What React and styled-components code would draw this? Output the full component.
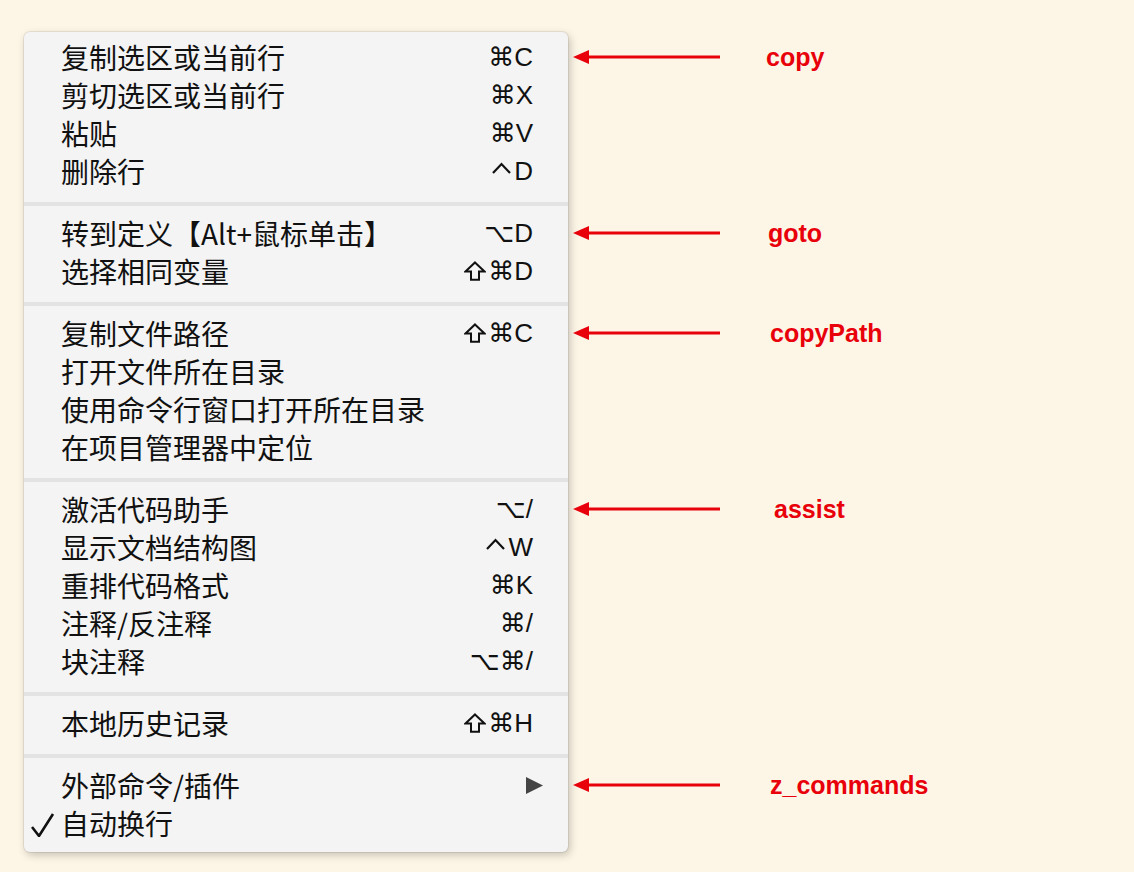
import React from 'react';
import styled, { createGlobalStyle } from 'styled-components';

const GlobalStyle = createGlobalStyle`
  html, body {
    margin: 0;
    padding: 0;
    background: #fdf6e6;
  }
`;

const Page = styled.div`
  min-height: 100vh;
  display: flex;
  align-items: flex-start;
  padding: 32px 0 0 24px;
  box-sizing: border-box;
`;

const Menu = styled.div`
  width: 544px;
  background: #f4f4f4;
  border-radius: 6px;
  padding: 6px 0 10px;
  box-shadow: 0 0 0 1px rgba(0, 0, 0, 0.07), 2px 3px 9px rgba(0, 0, 0, 0.22);
`;

const Notes = styled.div`
  display: flex;
  flex-direction: column;
  padding: 6px 0 10px;
`;

const Group = styled.div`
  display: flex;
  flex-direction: column;
`;

const Separator = styled.div`
  height: 4px;
  margin: 12px 0 8px;
  background: ${(p) => (p.$blank ? 'transparent' : '#e3e3e3')};
`;

const Row = styled.div`
  height: 38px;
  display: grid;
  grid-template-columns: 37px 1fr auto;
  align-items: center;
  padding-right: 35px;
`;

const Gutter = styled.div`
  display: flex;
  align-items: center;
  padding-left: 7px;
  padding-top: 4px;
`;

const Label = styled.span`
  font-family: "Noto Sans CJK SC", "Liberation Sans", sans-serif;
  font-size: 28px;
  line-height: 1;
  color: #111;
  white-space: nowrap;
`;

const Shortcut = styled.span`
  display: inline-flex;
  align-items: center;
  font-family: "Liberation Sans", "DejaVu Sans", sans-serif;
  font-size: 26px;
  line-height: 1;
  color: #111;
  white-space: nowrap;
`;

const KeyIcon = styled.svg`
  display: block;
  margin-right: ${(p) => p.$gap}px;
  margin-bottom: ${(p) => p.$lift}px;
`;

const Submenu = styled.svg`
  margin-right: -10px;
  display: block;
`;

const NoteRow = styled.div`
  height: 38px;
  display: flex;
  align-items: center;
`;

const Arrow = styled.svg`
  display: block;
  margin-left: 5px;
`;

const NoteText = styled.span`
  font-family: "Liberation Sans", Arial, sans-serif;
  font-weight: bold;
  font-size: 25px;
  line-height: 1;
  color: #e8000b;
  margin-left: ${(p) => 45 + p.$nudge}px;
`;

const groups = [
  [
    { label: '复制选区或当前行', key: '⌘C', note: 'copy', nudge: 0 },
    { label: '剪切选区或当前行', key: '⌘X' },
    { label: '粘贴', key: '⌘V' },
    { label: '删除行', key: 'D', ctrl: true },
  ],
  [
    { label: '转到定义【Alt+鼠标单击】', key: '⌥D', note: 'goto', nudge: 2 },
    { label: '选择相同变量', key: '⌘D', shift: true },
  ],
  [
    { label: '复制文件路径', key: '⌘C', shift: true, note: 'copyPath', nudge: 4 },
    { label: '打开文件所在目录' },
    { label: '使用命令行窗口打开所在目录' },
    { label: '在项目管理器中定位' },
  ],
  [
    { label: '激活代码助手', key: '⌥/', note: 'assist', nudge: 8 },
    { label: '显示文档结构图', key: 'W', ctrl: true },
    { label: '重排代码格式', key: '⌘K' },
    { label: '注释/反注释', key: '⌘/' },
    { label: '块注释', key: '⌥⌘/' },
  ],
  [{ label: '本地历史记录', key: '⌘H', shift: true }],
  [
    { label: '外部命令/插件', submenu: true, note: 'z_commands', nudge: 4 },
    { label: '自动换行', checked: true },
  ],
];

const Check = () => (
  <svg width="24" height="24" viewBox="0 0 24 24">
    <polyline points="1,14 8,23 22,1" fill="none" stroke="#111" strokeWidth="2.6" strokeLinejoin="miter" />
  </svg>
);

const ShiftIcon = () => (
  <KeyIcon width="22" height="20" viewBox="0 0 22 20" $gap={2} $lift={0}>
    <polygon points="11,1.5 20.5,10.5 15,10.5 15,18.8 7,18.8 7,10.5 1.5,10.5" fill="none" stroke="#111" strokeWidth="2" strokeLinejoin="miter" />
  </KeyIcon>
);

const CtrlIcon = () => (
  <KeyIcon width="19" height="12" viewBox="0 0 19 12" $gap={3} $lift={7}>
    <polyline points="1,11 9.5,2 18,11" fill="none" stroke="#111" strokeWidth="2.2" />
  </KeyIcon>
);

const MenuItem = ({ item }) => (
  <Row>
    <Gutter>{item.checked && <Check />}</Gutter>
    <Label>{item.label}</Label>
    {item.submenu ? (
      <Submenu width="17" height="17" viewBox="0 0 17 17">
        <polygon points="0,0 17,8.5 0,17" fill="#444" />
      </Submenu>
    ) : (
      <Shortcut>
        {item.shift && <ShiftIcon />}
        {item.ctrl && <CtrlIcon />}
        {item.key}
      </Shortcut>
    )}
  </Row>
);

const Note = ({ item }) => (
  <NoteRow>
    {item.note && (
      <>
        <Arrow width="148" height="16" viewBox="0 0 148 16">
          <line x1="12" y1="8" x2="147" y2="8" stroke="#e8000b" strokeWidth="3" />
          <polygon points="0,8 16,1 16,15" fill="#e8000b" />
        </Arrow>
        <NoteText $nudge={item.nudge}>{item.note}</NoteText>
      </>
    )}
  </NoteRow>
);

export default function App() {
  return (
    <>
      <GlobalStyle />
      <Page>
        <Menu>
          {groups.map((g, gi) => (
            <React.Fragment key={gi}>
              {gi > 0 && <Separator />}
              <Group>
                {g.map((item) => (
                  <MenuItem key={item.label} item={item} />
                ))}
              </Group>
            </React.Fragment>
          ))}
        </Menu>
        <Notes>
          {groups.map((g, gi) => (
            <React.Fragment key={gi}>
              {gi > 0 && <Separator $blank />}
              <Group>
                {g.map((item) => (
                  <Note key={item.label} item={item} />
                ))}
              </Group>
            </React.Fragment>
          ))}
        </Notes>
      </Page>
    </>
  );
}
